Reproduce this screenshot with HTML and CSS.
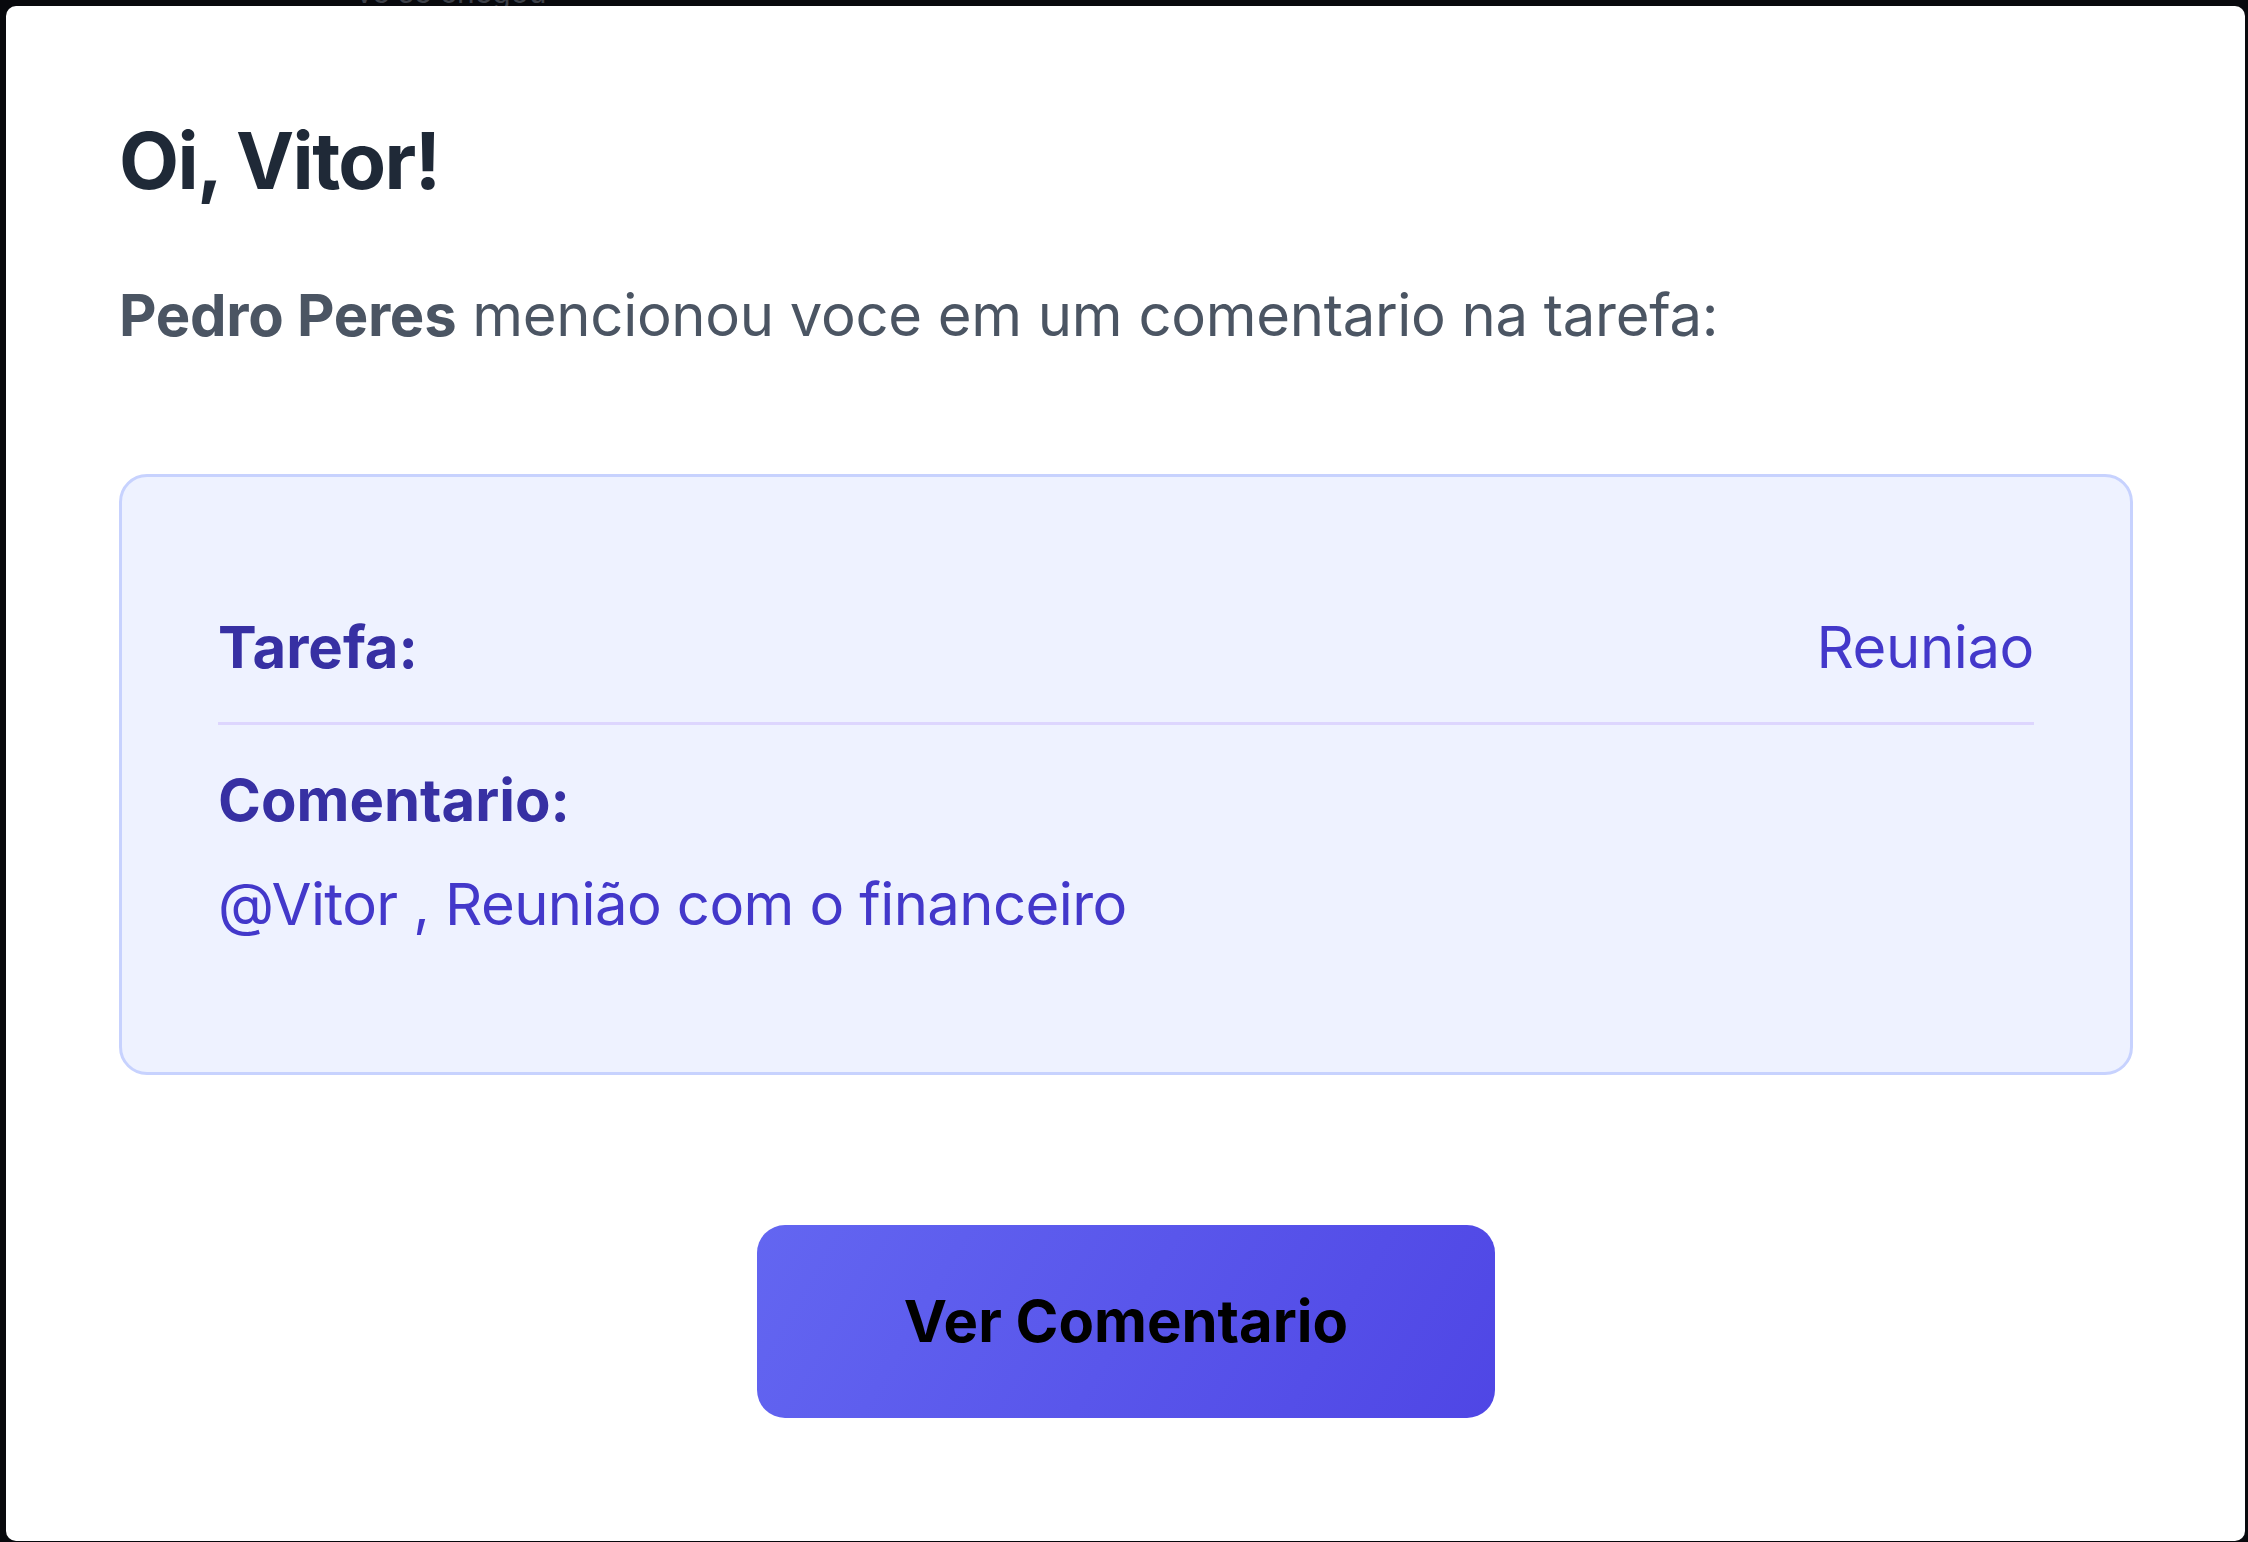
FILE: index.html
```html
<!DOCTYPE html>
<html lang="pt">
<head>
<meta charset="utf-8">
<title>Menção em comentário</title>
<link rel="stylesheet" href="styles.css">
</head>
<body>
<div class="strip"><span class="strip-text">ve se chegou</span></div>
<main class="mail">
  <h1 class="greeting">Oi, Vitor!</h1>
  <p class="intro"><strong>Pedro Peres</strong> mencionou voce em um comentario na tarefa:</p>
  <section class="details">
    <div class="row">
      <span class="label">Tarefa:</span>
      <span class="value">Reuniao</span>
    </div>
    <div class="divider"></div>
    <div class="label">Comentario:</div>
    <div class="comment">@Vitor , Reunião com o financeiro</div>
  </section>
  <div class="actions">
    <a class="button" href="#">Ver Comentario</a>
  </div>
</main>
</body>
</html>
```

FILE: styles.css
```css
* { box-sizing: border-box; }

html, body {
  margin: 0;
  padding: 0;
  background: #08090d;
  font-family: Inter, "Noto Sans", "Liberation Sans", sans-serif;
}

.strip {
  height: 6px;
  overflow: hidden;
  padding-left: 356px;
}

.strip-text {
  display: block;
  font-size: 30px;
  line-height: 30px;
  margin-top: -23px;
  color: #3d4048;
}

.mail {
  margin: 0 3px 0 6px;
  height: 1535px;
  background: #ffffff;
  border-radius: 10px;
  padding: 108px 112px 0 113px;
}

.greeting {
  margin: 0;
  font-size: 78px;
  line-height: 94px;
  font-weight: 700;
  color: #1f2937;
  letter-spacing: -1.6px;
}

.intro {
  margin: 72px 0 0;
  font-size: 58px;
  line-height: 70px;
  color: #4b5563;
  letter-spacing: -0.3px;
}

.intro strong {
  font-weight: 700;
}

.details {
  margin-top: 124px;
  background: #eef2ff;
  border: 3px solid #c7d2fe;
  border-radius: 28px;
  padding: 135px 96px 133px 96px;
}

.row {
  display: flex;
  justify-content: space-between;
  align-items: baseline;
}

.label {
  font-size: 58px;
  line-height: 70px;
  font-weight: 700;
  color: #3730a3;
}

.value {
  font-size: 58px;
  line-height: 70px;
  color: #4338ca;
  letter-spacing: -0.4px;
}

.divider {
  height: 3px;
  background: #ddd6fe;
  margin: 40px 0 40px;
}

.comment {
  margin-top: 34px;
  font-size: 58px;
  line-height: 70px;
  color: #4338ca;
  letter-spacing: -0.6px;
}

.actions {
  display: flex;
  justify-content: center;
  margin-top: 150px;
}

.button {
  display: inline-block;
  width: 738px;
  height: 193px;
  line-height: 193px;
  text-align: center;
  border-radius: 28px;
  background: linear-gradient(120deg, #6366f1 0%, #4f46e5 100%);
  color: #000000;
  font-size: 58px;
  font-weight: 700;
  text-decoration: none;
}
```
